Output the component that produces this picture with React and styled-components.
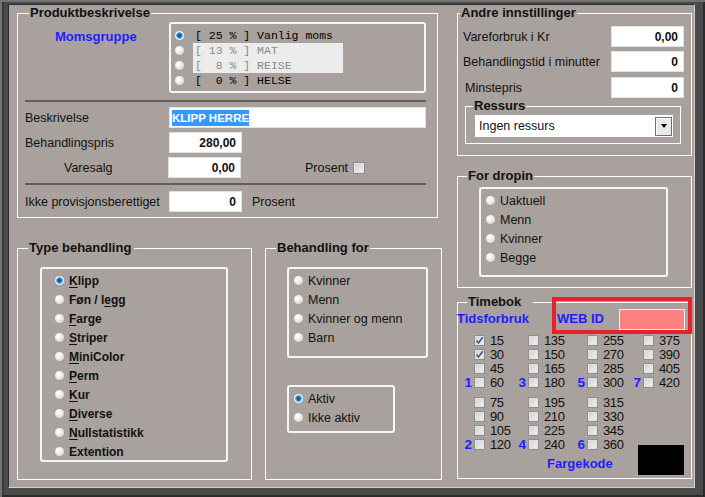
import React from 'react';
import styled, { createGlobalStyle } from 'styled-components';

const BLUE = '#1e1eff';
const PANEL = '#a9a19d';

const GlobalStyle = createGlobalStyle`
  html, body {
    margin: 0;
    padding: 0;
    background: ${PANEL};
  }
  body {
    font-family: "Liberation Sans", Arial, sans-serif;
    font-size: 12.5px;
    color: #111;
  }
`;

// ---- data
const momsRows = [
  { text: '[ 25 % ] Vanlig moms', checked: true },
  { text: '[ 13 % ] MAT', disabled: true },
  { text: '[  8 % ] REISE', disabled: true },
  { text: '[  0 % ] HELSE' },
];

const typeRows = [
  { pre: '', key: 'K', post: 'lipp', checked: true },
  { pre: 'Føn / l', key: 'e', post: 'gg' },
  { pre: '', key: 'F', post: 'arge' },
  { pre: '', key: 'S', post: 'triper' },
  { pre: '', key: 'M', post: 'iniColor' },
  { pre: '', key: 'P', post: 'erm' },
  { pre: '', key: 'K', post: 'ur' },
  { pre: '', key: 'D', post: 'iverse' },
  { pre: '', key: 'N', post: 'ullstatistikk' },
  { pre: 'Extention', key: '', post: '' },
];

const blockOne = [
  [{ v: 15, c: true }, { v: 135 }, { v: 255 }, { v: 375 }],
  [{ v: 30, c: true }, { v: 150 }, { v: 270 }, { v: 390 }],
  [{ v: 45 }, { v: 165 }, { v: 285 }, { v: 405 }],
  [{ v: 60, n: 1 }, { v: 180, n: 3 }, { v: 300, n: 5 }, { v: 420, n: 7 }],
];

const blockTwo = [
  [{ v: 75 }, { v: 195 }, { v: 315 }],
  [{ v: 90 }, { v: 210 }, { v: 330 }],
  [{ v: 105 }, { v: 225 }, { v: 345 }],
  [{ v: 120, n: 2 }, { v: 240, n: 4 }, { v: 360, n: 6 }],
];

// ---- small controls
const RadioDot = styled.span`
  flex: none;
  box-sizing: border-box;
  width: 11px;
  height: 11px;
  border-radius: 50%;
  border: 1px solid #a4a4a4;
  background: ${({ $checked }) =>
    $checked
      ? 'radial-gradient(circle at 50% 50%, #0a3f6e 0, #1f7fc8 2px, #58a9e0 3px, #f4f8fb 3.6px, #e6e6e6 5px)'
      : 'radial-gradient(circle at 38% 35%, #ffffff 0, #f1f1f1 35%, #c8c8c8 100%)'};
`;

const Check = styled.span`
  flex: none;
  box-sizing: border-box;
  width: ${({ $size = 11 }) => $size}px;
  height: ${({ $size = 11 }) => $size}px;
  border: 1px solid #8e8e8e;
  background: linear-gradient(135deg, #cfcfcf 0%, #f3f3f3 100%);
  box-shadow: inset 0 0 0 1px #e2e2e2;
  display: inline-flex;
  align-items: center;
  justify-content: center;
`;

const CheckBox = ({ checked, size }) => (
  <Check $size={size}>
    {checked && (
      <svg width="9" height="9" viewBox="0 0 9 9">
        <path d="M1.5 4.5 L3.5 7 L7.8 1.2" fill="none" stroke="#3f5585" strokeWidth="1.6" />
      </svg>
    )}
  </Check>
);

// ---- window frame
const Window = styled.div`
  width: 705px;
  height: 497px;
  box-sizing: border-box;
  padding: 4px 10px 9px 8px;
  background: #4a4a4a;
  box-shadow: inset 2px 2px 0 #727272, inset -2px -2px 0 #2a2a2a, inset 4px 0 0 #3a3a3a;
`;

const Panel = styled.div`
  height: 100%;
  box-sizing: border-box;
  background: ${PANEL};
  border: 1px solid;
  border-color: #2e2e2e #cfcfcf #cfcfcf #2e2e2e;
  padding: 1px 0 0 8px;
  display: flex;
  gap: 15px;
`;

const Column = styled.div`
  width: ${({ $w }) => $w}px;
  display: flex;
  flex-direction: column;
  gap: ${({ $gap }) => $gap}px;
`;

const Row = styled.div`
  display: flex;
  gap: ${({ $gap = 0 }) => $gap}px;
  margin-top: ${({ $mt = 0 }) => $mt}px;
`;

// ---- group box
const Group = styled.fieldset`
  position: relative;
  box-sizing: border-box;
  width: ${({ $w }) => $w}px;
  height: ${({ $h }) => $h}px;
  margin: ${({ $m = 0 }) => $m};
  padding: 0;
  min-inline-size: 0;
  border: 1px solid #ffffff;
`;

const Legend = styled.legend`
  margin-left: ${({ $offset }) => $offset}px;
  padding: 0 ${({ $padRight = 1 }) => $padRight}px 0 1px;
  font-size: 13px;
  font-weight: bold;
  line-height: 14px;
  color: #111;
`;

const RadioBox = styled.div`
  box-sizing: border-box;
  width: ${({ $w }) => $w}px;
  height: ${({ $h }) => $h}px;
  margin: ${({ $m = 0 }) => $m};
  padding-top: ${({ $pt = 2 }) => $pt}px;
  border: 2px solid #f6f6f6;
  border-radius: 3px;
`;

const RadioItem = styled.div`
  display: flex;
  align-items: center;
  gap: ${({ $gap = 4 }) => $gap}px;
  height: ${({ $h = 19 }) => $h}px;
  padding-left: ${({ $pl }) => $pl}px;
  font-weight: ${({ $bold }) => ($bold ? 'bold' : 'normal')};
  font-size: ${({ $bold }) => ($bold ? '12px' : '12.5px')};
`;

const Key = styled.span`
  text-decoration: underline;
  text-underline-offset: 2px;
`;

// ---- produktbeskrivelse
const MomsLabel = styled.div`
  width: 144px;
  box-sizing: border-box;
  padding: 7px 0 0 30px;
  color: ${BLUE};
  font-weight: bold;
  font-size: 13px;
`;

const MomsText = styled.span`
  display: inline-block;
  box-sizing: border-box;
  width: 150px;
  padding-left: 2px;
  font-family: "Liberation Mono", "Courier New", monospace;
  font-size: 11.5px;
  line-height: 15px;
  white-space: pre;
  color: ${({ $disabled }) => ($disabled ? '#8a8a8a' : '#000')};
  background: ${({ $disabled }) => ($disabled ? '#ececec' : 'transparent')};
`;

const Divider = styled.div`
  width: 401px;
  height: 2px;
  margin-top: ${({ $mt }) => $mt}px;
  background: #625e5c;
`;

const FormRow = styled.div`
  display: flex;
  align-items: center;
  height: 21px;
  margin-top: ${({ $mt = 0 }) => $mt}px;
`;

const Label = styled.div`
  width: ${({ $w }) => ($w ? `${$w}px` : 'auto')};
  flex: ${({ $w }) => ($w ? 'none' : '1')};
  box-sizing: border-box;
  padding-left: ${({ $indent = 0 }) => $indent}px;
  margin-left: ${({ $ml = 0 }) => $ml}px;
  white-space: nowrap;
`;

const Field = styled.div`
  flex: none;
  box-sizing: border-box;
  width: ${({ $w }) => $w}px;
  height: 21px;
  background: #ffffff;
  border: 1px solid #e2e2e2;
  display: flex;
  align-items: center;
  justify-content: ${({ $left }) => ($left ? 'flex-start' : 'flex-end')};
  padding: 0 5px 0 2px;
  font-size: 12px;
  font-weight: bold;
`;

const Selected = styled.span`
  background: #3399ff;
  color: #ffffff;
  font-size: 11.5px;
  line-height: 16px;
`;

const InlineCheck = styled.div`
  display: flex;
  align-items: center;
  gap: 5px;
  margin-left: ${({ $ml }) => $ml}px;
`;

// ---- andre innstillinger
const Select = styled.div`
  box-sizing: border-box;
  width: 198px;
  height: 22px;
  margin: 2px 0 0 9px;
  background: #ffffff;
  display: flex;
  align-items: center;
  padding: 0 1px 0 4px;
`;

const DropButton = styled.div`
  margin-left: auto;
  box-sizing: border-box;
  width: 17px;
  height: 19px;
  background: #e8e8e8;
  border: 1px solid #6e6e6e;
  box-shadow: inset 1px 1px 0 #ffffff;
  display: flex;
  align-items: center;
  justify-content: center;

  &::after {
    content: '';
    border-left: 3.5px solid transparent;
    border-right: 3.5px solid transparent;
    border-top: 4px solid #000;
  }
`;

const Inner = styled.div`
  padding: ${({ $pad }) => $pad};
`;

// ---- timebok
const TimeHeader = styled.div`
  position: relative;
  display: flex;
  align-items: center;
  height: 22px;
  margin-top: -1px;
`;

const BlueLabel = styled.div`
  width: ${({ $w }) => ($w ? `${$w}px` : 'auto')};
  margin-left: ${({ $ml = 0 }) => $ml}px;
  margin-top: ${({ $mt = 0 }) => $mt}px;
  padding-bottom: ${({ $pb = 0 }) => $pb}px;
  color: ${BLUE};
  font-weight: bold;
  font-size: 13px;
  line-height: 16px;
`;

const WebInput = styled.div`
  box-sizing: border-box;
  width: 66px;
  height: 21px;
  background: #ff8080;
  border: 1px solid #f4f4f4;
`;

// annotation frame drawn over the WEB ID field
const Highlight = styled.div`
  position: absolute;
  left: 94px;
  top: -11px;
  width: 140px;
  height: 37px;
  box-sizing: border-box;
  border: 4px solid #e8222a;
  pointer-events: none;
`;

const MinuteGrid = styled.div`
  display: grid;
  grid-template-columns: ${({ $cols }) => $cols};
  grid-auto-rows: 14px;
  margin-top: ${({ $mt = 0 }) => $mt}px;
`;

const MinuteCell = styled.div`
  display: flex;
  align-items: center;
  font-size: 13px;
  letter-spacing: -0.4px;
`;

const Num = styled.span`
  width: 11px;
  margin-right: 2px;
  text-align: right;
  color: ${BLUE};
  font-weight: bold;
  font-size: 13.5px;
  letter-spacing: 0;
`;

const MinuteText = styled.span`
  margin-left: 5px;
`;

const LowerArea = styled.div`
  display: flex;
  align-items: flex-end;
`;

const Swatch = styled.div`
  width: 46px;
  height: 30px;
  margin-left: 8px;
  background: #000000;
`;

const MinuteBlock = ({ rows, cols, mt }) => (
  <MinuteGrid $cols={cols} $mt={mt}>
    {rows.flat().map((m) => (
      <MinuteCell key={m.v}>
        <Num>{m.n || ''}</Num>
        <CheckBox checked={m.c} />
        <MinuteText>{m.v}</MinuteText>
      </MinuteCell>
    ))}
  </MinuteGrid>
);

const Radio = ({ checked, children, ...rest }) => (
  <RadioItem {...rest}>
    <RadioDot $checked={checked} />
    <span>{children}</span>
  </RadioItem>
);

export default function App() {
  return (
    <>
      <GlobalStyle />
      <Window>
        <Panel>
          <Column $w={425} $gap={23}>
            <Group $w={421} $h={212}>
              <Legend $offset={11}>Produktbeskrivelse</Legend>
              <Inner $pad="0 0 0 7px">
                <Row $mt={2}>
                  <MomsLabel>Momsgruppe</MomsLabel>
                  <RadioBox $w={257} $h={71} $pt={4}>
                    {momsRows.map((r) => (
                      <RadioItem key={r.text} $h={15} $pl={3} $gap={8}>
                        <RadioDot $checked={r.checked} />
                        <MomsText $disabled={r.disabled}>{r.text}</MomsText>
                      </RadioItem>
                    ))}
                  </RadioBox>
                </Row>
                <Divider $mt={7} />
                <FormRow $mt={5}>
                  <Label $w={144}>Beskrivelse</Label>
                  <Field $w={257} $left>
                    <Selected>KLIPP HERRE</Selected>
                  </Field>
                </FormRow>
                <FormRow $mt={4}>
                  <Label $w={144}>Behandlingspris</Label>
                  <Field $w={73}>280,00</Field>
                </FormRow>
                <FormRow $mt={4}>
                  <Label $w={143} $indent={39}>Varesalg</Label>
                  <Field $w={73}>0,00</Field>
                  <InlineCheck $ml={64}>
                    Prosent
                    <CheckBox size={12} />
                  </InlineCheck>
                </FormRow>
                <Divider $mt={5} />
                <FormRow $mt={6}>
                  <Label $w={144}>Ikke provisjonsberettiget</Label>
                  <Field $w={73}>0</Field>
                  <Label $ml={10}>Prosent</Label>
                </FormRow>
              </Inner>
            </Group>

            <Row $gap={13}>
              <Group $w={235} $h={239}>
                <Legend $offset={10} $padRight={3}>Type behandling</Legend>
                <RadioBox $w={188} $h={195} $m="12px 0 0 22px">
                  {typeRows.map((t, i) => (
                    <Radio key={i} checked={t.checked} $pl={12} $bold>
                      {t.pre}
                      {t.key && <Key>{t.key}</Key>}
                      {t.post}
                    </Radio>
                  ))}
                </RadioBox>
              </Group>

              <Group $w={177} $h={239}>
                <Legend $offset={10}>Behandling for</Legend>
                <RadioBox $w={141} $h={91} $m="12px 0 0 21px">
                  <Radio $pl={4}>Kvinner</Radio>
                  <Radio $pl={4}>Menn</Radio>
                  <Radio $pl={4}>Kvinner og menn</Radio>
                  <Radio $pl={4}>Barn</Radio>
                </RadioBox>
                <RadioBox $w={108} $h={48} $m="27px 0 0 21px">
                  <Radio $pl={4} checked>Aktiv</Radio>
                  <Radio $pl={4}>Ikke aktiv</Radio>
                </RadioBox>
              </Group>
            </Row>
          </Column>

          <Column $w={235} $gap={13}>
            <Group $w={235} $h={150}>
              <Legend $offset={2}>Andre innstillinger</Legend>
              <Inner $pad="0 7px 0 5px">
                <FormRow $mt={6}>
                  <Label>Vareforbruk i Kr</Label>
                  <Field $w={73}>0,00</Field>
                </FormRow>
                <FormRow $mt={4}>
                  <Label>Behandlingstid i minutter</Label>
                  <Field $w={73}>0</Field>
                </FormRow>
                <FormRow $mt={5}>
                  <Label $indent={2}>Minstepris</Label>
                  <Field $w={73}>0</Field>
                </FormRow>
                <Group $w={216} $h={45} $m="1px 0 0 2px">
                  <Legend $offset={7}>Ressurs</Legend>
                  <Select>
                    Ingen ressurs
                    <DropButton />
                  </Select>
                </Group>
              </Inner>
            </Group>

            <Group $w={235} $h={119}>
              <Legend $offset={9}>For dropin</Legend>
              <RadioBox $w={189} $h={90} $m="4px 0 0 21px">
                <Radio $pl={4}>Uaktuell</Radio>
                <Radio $pl={4}>Menn</Radio>
                <Radio $pl={4}>Kvinner</Radio>
                <Radio $pl={4}>Begge</Radio>
              </RadioBox>
            </Group>

            <Group $w={235} $h={184} $m="-6px 0 0 0">
              <Legend $offset={9} $padRight={12}>Timebok</Legend>
              <TimeHeader>
                <BlueLabel $w={100} $ml={-1}>Tidsforbruk</BlueLabel>
                <BlueLabel $w={62}>WEB ID</BlueLabel>
                <WebInput />
                <Highlight />
              </TimeHeader>
              <Inner $pad="0 0 0 3px">
                <MinuteBlock rows={blockOne} cols="54px 59px 56px 1fr" mt={3} />
                <LowerArea>
                  <div>
                    <MinuteBlock rows={blockTwo} cols="54px 59px 56px" mt={6} />
                    <BlueLabel $ml={86} $mt={5} $pb={3}>Fargekode</BlueLabel>
                  </div>
                  <Swatch />
                </LowerArea>
              </Inner>
            </Group>
          </Column>
        </Panel>
      </Window>
    </>
  );
}
